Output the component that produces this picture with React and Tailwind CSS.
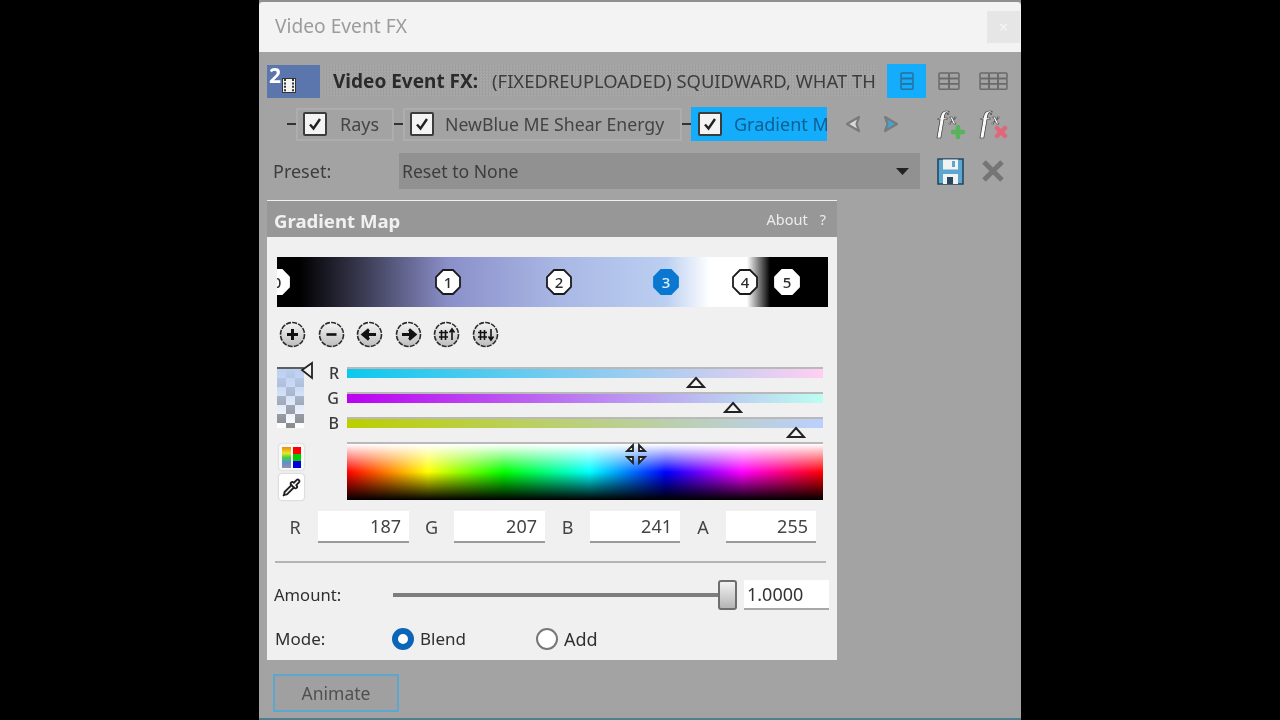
import React from "react";
import { Pipette } from "lucide-react";

function Check() {
  return (
    <span className="flex h-[24px] w-[24px] shrink-0 items-center justify-center rounded-[2px] border-2 border-[#3c3c3c] bg-[#f4f4f4]">
      <svg width="16" height="16" viewBox="0 0 16 16" fill="none" stroke="#222" strokeWidth="2.4"><path d="M3 8.5 L6.5 12.5 L13 3" /></svg>
    </span>
  );
}

function Dash() {
  return <span className="h-[2px] w-[9px] shrink-0 bg-[#333]" />;
}

function ViewIcon({ cols, color }) {
  const cw = cols === 1 ? 12 : cols === 2 ? 10 : 9;
  const cells = [];
  for (let c = 0; c < cols; c++) {
    for (let r = 0; r < 3; r++) {
      cells.push(<rect key={c + "-" + r} x={1 + c * cw} y={1 + r * 5.4} width={cw} height="5.4" rx="1" />);
    }
  }
  const vw = cols === 1 ? 14 : cols === 2 ? 22 : 29;
  return (
    <svg width={vw} height="18" viewBox={`0 0 ${vw} 18`} fill="none" stroke={color} strokeWidth="1.5">{cells}</svg>
  );
}

function Arrow({ dir, fill }) {
  return (
    <svg width="16" height="18" viewBox="0 0 16 18">
      <path d={dir === "l" ? "M14 2 L2 9 L14 16 L11.5 9 Z" : "M2 2 L14 9 L2 16 L4.5 9 Z"} fill={fill} stroke="#7a7a7a" strokeWidth="2.2" strokeLinejoin="round" />
    </svg>
  );
}

function Fx({ bad }) {
  return (
    <span className="relative block h-[28px] w-[28px]">
      <span className="absolute left-[1px] top-[-4px] font-['Liberation_Serif',serif] text-[29px] font-bold italic leading-[32px] text-[#fafafa] [-webkit-text-stroke:0.7px_#333]">f</span>
      <span className="absolute left-[13px] top-[1px] font-['Liberation_Serif',serif] text-[15px] font-bold italic leading-[16px] text-[#fafafa] [-webkit-text-stroke:0.5px_#333]">x</span>
      <svg className="absolute bottom-[-1px] right-[-1px]" width="14" height="14" viewBox="0 0 14 14">
        {bad ? (
          <path d="M3 3 L11 11 M11 3 L3 11" stroke="#e0677a" strokeWidth="4.5" strokeLinecap="round" />
        ) : (
          <path d="M7 2 V12 M2 7 H12" stroke="#57b35c" strokeWidth="4.5" strokeLinecap="round" />
        )}
      </svg>
    </span>
  );
}

function Marker({ n, x, active, solid }) {
  const fill = active ? "#0a78d0" : "#ffffff";
  const stroke = active ? "#0a78d0" : solid ? "#ffffff" : "#1b1b1b";
  return (
    <span className="absolute top-[11px] h-[28px] w-[28px]" style={{ left: x }}>
      <svg width="28" height="28" viewBox="0 0 28 28" className="absolute left-0 top-0">
        <polygon points="9,2 19,2 26,9 26,19 19,26 9,26 2,19 2,9" fill={fill} stroke={stroke} strokeWidth="1.8" />
      </svg>
      <span className={`absolute inset-0 flex items-center justify-center text-[15px] font-medium leading-none ${active ? "text-[#dfeefa]" : "text-[#2c2c2c]"}`}>{n}</span>
    </span>
  );
}

function Round({ children }) {
  return (
    <span className="block h-[27px] w-[27px] shrink-0">
      <svg width="27" height="27" viewBox="0 0 27 27">
        <defs>
          <linearGradient id="rg" x1="0" y1="0" x2="0" y2="1">
            <stop offset="0" stopColor="#f4f4f4" />
            <stop offset="1" stopColor="#bdbdbd" />
          </linearGradient>
        </defs>
        <circle cx="13.5" cy="13.5" r="12" fill="url(#rg)" stroke="#2a2a2a" strokeWidth="1.6" strokeDasharray="5 1.2" />
        {children}
      </svg>
    </span>
  );
}

function Tri({ x }) {
  return (
    <svg className="absolute top-[9px]" style={{ left: x }} width="20" height="13" viewBox="0 0 20 13">
      <path d="M10 2 L18 11 H2 Z" fill="#f4f4f4" stroke="#222" strokeWidth="2" />
    </svg>
  );
}

function SliderRow({ label, cls, tri }) {
  return (
    <div className="flex h-[25px] items-start">
      <span className="w-[28px] pr-[8px] text-right text-[16px] font-medium leading-[13px] text-[#3a3a3a]">{label}</span>
      <div className="relative h-[25px] w-[476px]">
        <div className={`h-[11px] border-t-2 border-[#b9b9b9] ${cls}`} />
        <Tri x={tri} />
      </div>
    </div>
  );
}

function Num({ label, value, lw, w }) {
  return (
    <>
      <span className="text-center text-[18px] leading-none text-[#444]" style={{ width: lw }}>{label}</span>
      <span className="flex h-[32px] items-center justify-end border-b-2 border-[#9a9a9a] bg-white pr-[8px] text-[18px] text-[#444]" style={{ width: w }}>{value}</span>
    </>
  );
}

export default function App() {
  return (
    <div className="flex h-[720px] w-[1280px] justify-center overflow-hidden bg-black font-['Noto_Sans',sans-serif] blur-[0.35px]">
      <div className="flex h-[720px] w-[762px] flex-col border-t-2 border-[#8f8f8f] bg-[#a3a3a3]">
        {/* title */}
        <div className="flex h-[50px] shrink-0 items-center justify-between rounded-t-[4px] bg-[#f3f3f3] pl-[16px] pr-[1px]">
          <span className="pb-[2px] text-[19.2px] text-[#9c9c9c]">Video Event FX</span>
          <span className="flex h-[32px] w-[33px] items-center justify-center bg-[#e6e6e6] text-[16px] leading-none text-[#f6f6f6]">×</span>
        </div>

        {/* header row */}
        <div className="mt-[12px] flex h-[34px] shrink-0 items-center pl-[8px]">
          <div className="relative h-[33px] w-[53px] shrink-0 bg-[#5a76ac]">
            <span className="absolute left-[2px] top-[-3px] text-[21px] font-bold leading-[26px] text-white">2</span>
            <svg className="absolute left-[15px] top-[13px]" width="14" height="15" viewBox="0 0 14 15">
              <rect x="0.5" y="0.5" width="13" height="14" fill="#f4f4f4" stroke="#333" />
              <path d="M3 1 V14 M11 1 V14" stroke="#333" strokeWidth="2" strokeDasharray="2 1.4" />
            </svg>
          </div>
          <div className="ml-[5px] flex h-[34px] w-[552px] shrink-0 items-center overflow-hidden whitespace-nowrap bg-[repeating-conic-gradient(#9f9f9f_0_25%,#a9a9a9_0_50%)] bg-[length:3px_3px] pl-[8px]">
            <span className="text-[19px] font-bold text-[#2b2b2b]">Video Event FX:</span>
            <span className="ml-[14px] text-[18.4px] text-[#3d3d3d]">(FIXEDREUPLOADED) SQUIDWARD, WHAT THE</span>
          </div>
          <div className="ml-[10px] flex h-[34px] w-[39px] shrink-0 items-center justify-center bg-[#13adfb]">
            <ViewIcon cols={1} color="#2a6f9d" />
          </div>
          <div className="ml-[12px] flex w-[22px] justify-center"><ViewIcon cols={2} color="#6a6a6a" /></div>
          <div className="ml-[19px] flex w-[29px] justify-center"><ViewIcon cols={3} color="#6a6a6a" /></div>
        </div>

        {/* tabs row */}
        <div className="mt-[9px] flex h-[34px] shrink-0 items-center pl-[28px]">
          <Dash />
          <div className="flex h-[33px] w-[98px] items-center border-2 border-[#adadad] pl-[5px]">
            <Check />
            <span className="ml-[13px] text-[18px] text-[#444]">Rays</span>
          </div>
          <Dash />
          <div className="flex h-[33px] w-[279px] items-center border-2 border-[#adadad] pl-[5px]">
            <Check />
            <span className="ml-[11px] whitespace-nowrap text-[17.7px] text-[#444]">NewBlue ME Shear Energy</span>
          </div>
          <Dash />
          <div className="flex h-[34px] w-[136px] items-center overflow-hidden whitespace-nowrap bg-[#13adfb] pl-[7px]">
            <Check />
            <span className="ml-[12px] text-[18px] text-[#0f5f8f]">Gradient Map</span>
          </div>
          <div className="ml-[18px]"><Arrow dir="l" fill="#d8d8d8" /></div>
          <div className="ml-[22px]"><Arrow dir="r" fill="#3ca6d8" /></div>
          <div className="ml-[37px]"><Fx /></div>
          <div className="ml-[15px]"><Fx bad /></div>
        </div>

        {/* preset row */}
        <div className="mt-[12px] flex h-[36px] shrink-0 items-center pl-[14px]">
          <span className="w-[126px] text-[18px] text-[#3d3d3d]">Preset:</span>
          <div className="flex h-[36px] w-[521px] items-center justify-between bg-[#919191] pl-[3px] pr-[11px]">
            <span className="text-[17.6px] text-[#3d3d3d]">Reset to None</span>
            <svg width="13" height="7" viewBox="0 0 13 7"><path d="M0 0 H13 L6.5 7 Z" fill="#222" /></svg>
          </div>
          <svg className="ml-[17px]" width="27" height="27" viewBox="0 0 27 27">
            <path d="M1 1 H26 V26 H1 Z" fill="#5ca6d0" stroke="#23485f" strokeWidth="1.6" />
            <rect x="6" y="1.5" width="15" height="10" fill="#f2f2f2" />
            <rect x="15" y="3" width="3" height="6" fill="#5ca6d0" />
            <rect x="6" y="16" width="15" height="10" fill="#f2f2f2" />
            <rect x="10" y="19" width="6" height="7" fill="#23485f" />
          </svg>
          <svg className="ml-[17px]" width="24" height="24" viewBox="0 0 24 24">
            <path d="M3 3 L21 21 M21 3 L3 21" stroke="#757575" strokeWidth="5" />
          </svg>
        </div>

        {/* panel */}
        <div className="ml-[8px] mt-[11px] flex h-[460px] w-[570px] shrink-0 flex-col bg-[#f0f0f0]">
          <div className="flex h-[37px] shrink-0 items-center justify-between border-t border-[#f0f0f0] bg-[#979797] pl-[7px] pr-[9px] pt-[3px]">
            <span className="text-[18.6px] font-bold text-[#f1f1f1]">Gradient Map</span>
            <span className="pb-[2px] pr-[2px] text-[14.5px] text-[#ececec]">About<span className="ml-[12px]">?</span></span>
          </div>

          <div className="relative ml-[10px] mt-[20px] h-[50px] w-[551px] shrink-0 overflow-hidden bg-[linear-gradient(to_right,#000_0%,#000_4%,#3a3a52_15.5%,#8a8fc9_31%,#a9b7e4_51%,#bbcff1_70.6%,#ffffff_78.6%,#ffffff_85.3%,#000_89.5%,#000_100%)]">
            <Marker n="0" x={-14} solid />
            <Marker n="1" x={157} />
            <Marker n="2" x={268} />
            <Marker n="3" x={375} active />
            <Marker n="4" x={454} />
            <Marker n="5" x={496} solid />
          </div>

          <div className="ml-[12px] mt-[14px] flex h-[27px] shrink-0 gap-[11.6px]">
            <Round><path d="M8 13.5 H19 M13.5 8 V19" stroke="#111" strokeWidth="3" /></Round>
            <Round><path d="M8.5 13.5 H18.5" stroke="#111" strokeWidth="2.6" /></Round>
            <Round><path d="M20 13.5 H10 M13 8.5 L7 13.5 L13 18.5" fill="#111" stroke="#111" strokeWidth="3" /></Round>
            <Round><path d="M7 13.5 H17 M14 8.5 L20 13.5 L14 18.5" fill="#111" stroke="#111" strokeWidth="3" /></Round>
            <Round><path d="M8.5 9 V19 M12.5 9 V19 M6 11.5 H15 M6 16 H15 M19 19 V9 M16.5 11.5 L19 8 L21.5 11.5" fill="none" stroke="#111" strokeWidth="1.6" /></Round>
            <Round><path d="M8.5 9 V19 M12.5 9 V19 M6 11.5 H15 M6 16 H15 M19 8 V18 M16.5 15.5 L19 19 L21.5 15.5" fill="none" stroke="#111" strokeWidth="1.6" /></Round>
          </div>

          <div className="mt-[19px] flex shrink-0 pl-[10px]">
            {/* left tools */}
            <div className="flex w-[42px] shrink-0 flex-col">
              <div className="relative h-[61px] w-[27px] border-t-2 border-[#5e5e5e] bg-[linear-gradient(to_bottom,#bbcff1_0%,#bbcff1bb_35%,transparent_100%),repeating-conic-gradient(#8a8a8a_0_25%,#fff_0_50%)] bg-[length:100%_100%,18px_18px]">
                <svg className="absolute left-[23px] top-[-8px]" width="14" height="20" viewBox="0 0 14 20">
                  <path d="M12 2 L2 9 L12 17 Z" fill="#f4f4f4" stroke="#222" strokeWidth="1.8" />
                </svg>
              </div>
              <div className="ml-[2px] mt-[16px] flex h-[26px] w-[25px] items-center justify-center rounded-[3px] bg-[#f8f8f8] shadow-[0_0_2px_#bbb]">
                <svg width="21" height="23" viewBox="0 0 21 23">
                  <defs>
                    <linearGradient id="stripes" x1="0" y1="0" x2="0" y2="1">
                      <stop offset="0" stopColor="#e98a1c" />
                      <stop offset="0.3" stopColor="#e8e81c" />
                      <stop offset="0.5" stopColor="#3fd24a" />
                      <stop offset="0.75" stopColor="#5f8fd0" />
                      <stop offset="1" stopColor="#9a8fb0" />
                    </linearGradient>
                  </defs>
                  <rect x="1" y="1" width="9" height="21" fill="url(#stripes)" />
                  <rect x="12" y="1" width="8" height="7" fill="#f00" />
                  <rect x="12" y="8" width="8" height="7" fill="#0c0" />
                  <rect x="12" y="15" width="8" height="7" fill="#00d" />
                </svg>
              </div>
              <div className="ml-[2px] mt-[4px] flex h-[26px] w-[25px] items-center justify-center rounded-[3px] bg-white shadow-[0_0_2px_#aaa]">
                <Pipette size={19} color="#222" strokeWidth={2.4} />
              </div>
            </div>

            {/* sliders and field */}
            <div className="flex flex-col">
              <SliderRow label="R" tri={339} cls="bg-[linear-gradient(to_right,#0cc8ee,#ffcff1)]" />
              <SliderRow label="G" tri={376} cls="bg-[linear-gradient(to_right,#bb00f1,#bbfff1)]" />
              <SliderRow label="B" tri={439} cls="bg-[linear-gradient(to_right,#bbcf00,#bbcfff)]" />
              <div className="relative ml-[28px] h-[58px] w-[476px] border-t-2 border-[#b9b9b9] bg-[linear-gradient(to_bottom,#ffffff_0%,#ffffff00_50%,#00000000_50%,#000000_100%),linear-gradient(to_right,#f00,#ff0_17%,#0f0_33%,#0ff_51%,#00f_67%,#f0f_83%,#f00)]">
                <svg className="absolute left-[277px] top-[-2px]" width="24" height="24" viewBox="0 0 24 24">
                  <path d="M9 3 V9 H3 Z M15 3 V9 H21 Z M9 21 V15 H3 Z M15 21 V15 H21 Z" fill="#e8e8e8" stroke="#222" strokeWidth="1.8" />
                </svg>
              </div>
            </div>
          </div>

          {/* RGBA */}
          <div className="ml-[5px] mt-[11px] flex h-[32px] shrink-0 items-center">
            <Num label="R" value="187" lw={46} w={91} />
            <Num label="G" value="207" lw={45} w={91} />
            <Num label="B" value="241" lw={45} w={90} />
            <Num label="A" value="255" lw={46} w={90} />
          </div>

          <div className="ml-[8px] mt-[18px] h-[2px] w-[551px] shrink-0 bg-[#b4b4b4]" />

          {/* amount */}
          <div className="mt-[17px] flex h-[30px] shrink-0 items-center pl-[7px]">
            <span className="w-[119px] text-[16.6px] text-[#2f2f2f]">Amount:</span>
            <div className="relative h-[4px] w-[337px] bg-[#7d7d7d]">
              <div className="absolute left-[325px] top-[-13px] h-[30px] w-[19px] rounded-[3px] border-2 border-[#6e6e6e] bg-[linear-gradient(to_bottom,#f2f2f2,#b5b5b5)]" />
            </div>
            <span className="ml-[14px] flex h-[30px] w-[85px] items-center border-b-2 border-[#a8a8a8] bg-white pl-[3px] text-[18px] text-[#333]">1.0000</span>
          </div>

          {/* mode */}
          <div className="mt-[14px] flex h-[30px] shrink-0 items-center pl-[8px]">
            <span className="w-[117px] text-[17px] text-[#2f2f2f]">Mode:</span>
            <span className="h-[22px] w-[22px] rounded-full border-[6px] border-[#0b66b8] bg-white" />
            <span className="ml-[6px] w-[116px] text-[17px] text-[#2f2f2f]">Blend</span>
            <span className="h-[22px] w-[22px] rounded-full border-2 border-[#777] bg-white" />
            <span className="ml-[6px] text-[18px] text-[#2f2f2f]">Add</span>
          </div>
        </div>

        {/* animate */}
        <div className="ml-[14px] mt-[14px] flex h-[38px] w-[126px] shrink-0 items-center justify-center border-2 border-[#5ea6cf] bg-[#a0a0a0] text-[17.5px] text-[#505050]">Animate</div>
        <div className="mt-[6px] h-[2px] w-full bg-[#4f7f8a]" />
      </div>
    </div>
  );
}
